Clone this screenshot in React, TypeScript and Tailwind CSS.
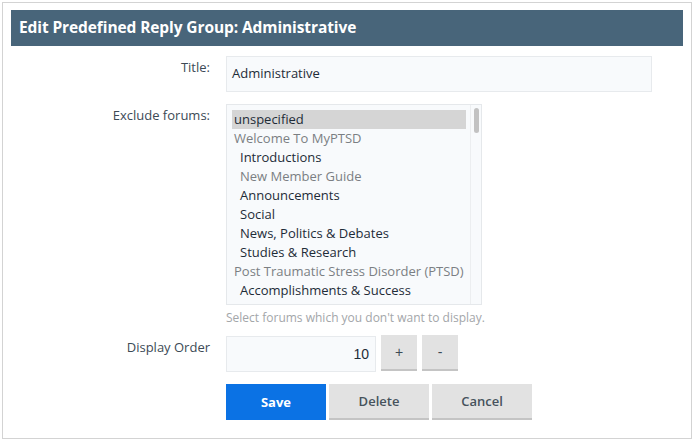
import React from "react";

const forums: { name: string; level: number; muted?: boolean; selected?: boolean }[] = [
  { name: "unspecified", level: 0, selected: true },
  { name: "Welcome To MyPTSD", level: 0, muted: true },
  { name: "Introductions", level: 1 },
  { name: "New Member Guide", level: 1, muted: true },
  { name: "Announcements", level: 1 },
  { name: "Social", level: 1 },
  { name: "News, Politics & Debates", level: 1 },
  { name: "Studies & Research", level: 1 },
  { name: "Post Traumatic Stress Disorder (PTSD)", level: 0, muted: true },
  { name: "Accomplishments & Success", level: 1 },
  { name: "Anxiety & Social Anxiety", level: 1 },
];

// Label column on the left, control on the right
function Row({ label, children, className = "" }: { label: string; children: React.ReactNode; className?: string }) {
  return (
    <div className={`flex ${className}`}>
      <div className="w-[199px] shrink-0 text-right pt-[1px] text-[13px] leading-[20px] text-[#3c4a56]">{label}</div>
      <div className="ml-[16px] flex-1 min-w-0">{children}</div>
    </div>
  );
}

export default function App() {
  return (
    <div className="w-[695px] h-[443px] bg-white overflow-hidden" style={{ fontFamily: '"Open Sans", "Liberation Sans", sans-serif' }}>
      <div className="ml-[2px] mt-[2px] w-[690px] h-[437px] border border-[#d3d3d3] px-[8px] pt-[7px]">
        <div className="h-[36px] bg-[#48657a] px-[8px] flex items-center text-white text-[15.5px] font-bold tracking-[-0.1px]">
          Edit Predefined Reply Group: Administrative
        </div>

        <Row label="Title:" className="mt-[10px]">
          <div className="w-[426px] h-[36px] bg-[#f8fafc] border border-[#e7eaed] px-[5px] flex items-center text-[13px] text-[#1e2c38]">
            Administrative
          </div>
        </Row>

        <Row label="Exclude forums:" className="mt-[12px]">
          <div className="w-[256px] h-[201px] bg-[#f8fafc] border border-[#e5e8eb] flex overflow-hidden">
            <div className="flex-1 min-w-0 pl-[5px] pr-[4px] pt-[5px] overflow-hidden">
              {forums.map((f) => (
                <div
                  key={f.name}
                  className={`h-[19px] leading-[18px] text-[13px] whitespace-nowrap ${f.level ? "pl-[8px]" : "pl-[2px]"} ${
                    f.selected ? "bg-[#d5d5d5] text-[#1e2c38]" : f.muted ? "text-[#7b7f83]" : "text-[#1e2c38]"
                  }`}
                >
                  {f.name}
                </div>
              ))}
            </div>
            <div className="w-[11px] shrink-0 border-l border-[#eceef0] pt-[3px] flex justify-center">
              <div className="w-[5px] h-[25px] rounded-full bg-[#c2c2c2]" />
            </div>
          </div>
          <div className="mt-[5px] text-[12px] leading-[16px] text-[#a3a6a9]">Select forums which you don't want to display.</div>
        </Row>

        <Row label="Display Order" className="mt-[10px]">
          <div className="flex items-start gap-[5px]">
            <div
              className="w-[150px] h-[36px] bg-[#f8fafc] border border-[#e7eaed] pr-[6px] flex items-center justify-end text-[14px] text-[#1e2c38]"
              style={{ fontFamily: '"Liberation Sans", Arial, sans-serif' }}
            >
              10
            </div>
            <button
              className="-mt-[1px] w-[36px] h-[36px] bg-[#e2e2e2] border-b-[2px] border-[#c4c4c4] text-[14px] text-[#3c4a56]"
              style={{ fontFamily: '"Liberation Sans", Arial, sans-serif' }}
            >
              +
            </button>
            <button
              className="-mt-[1px] w-[36px] h-[36px] bg-[#e2e2e2] border-b-[2px] border-[#c4c4c4] text-[14px] text-[#3c4a56]"
              style={{ fontFamily: '"Liberation Sans", Arial, sans-serif' }}
            >
              -
            </button>
          </div>
        </Row>

        <div className="mt-[12px] ml-[215px] flex gap-[3px]">
          <button className="w-[100px] h-[36px] pt-[2px] bg-[#0b72e4] text-white text-[13px] font-bold">Save</button>
          <button className="w-[100px] h-[36px] pt-[2px] bg-[#e2e2e2] border-b-[2px] border-[#c4c4c4] text-[13px] font-semibold text-[#46525c]">Delete</button>
          <button className="w-[100px] h-[36px] pt-[2px] bg-[#e2e2e2] border-b-[2px] border-[#c4c4c4] text-[13px] font-semibold text-[#46525c]">Cancel</button>
        </div>
      </div>
    </div>
  );
}
